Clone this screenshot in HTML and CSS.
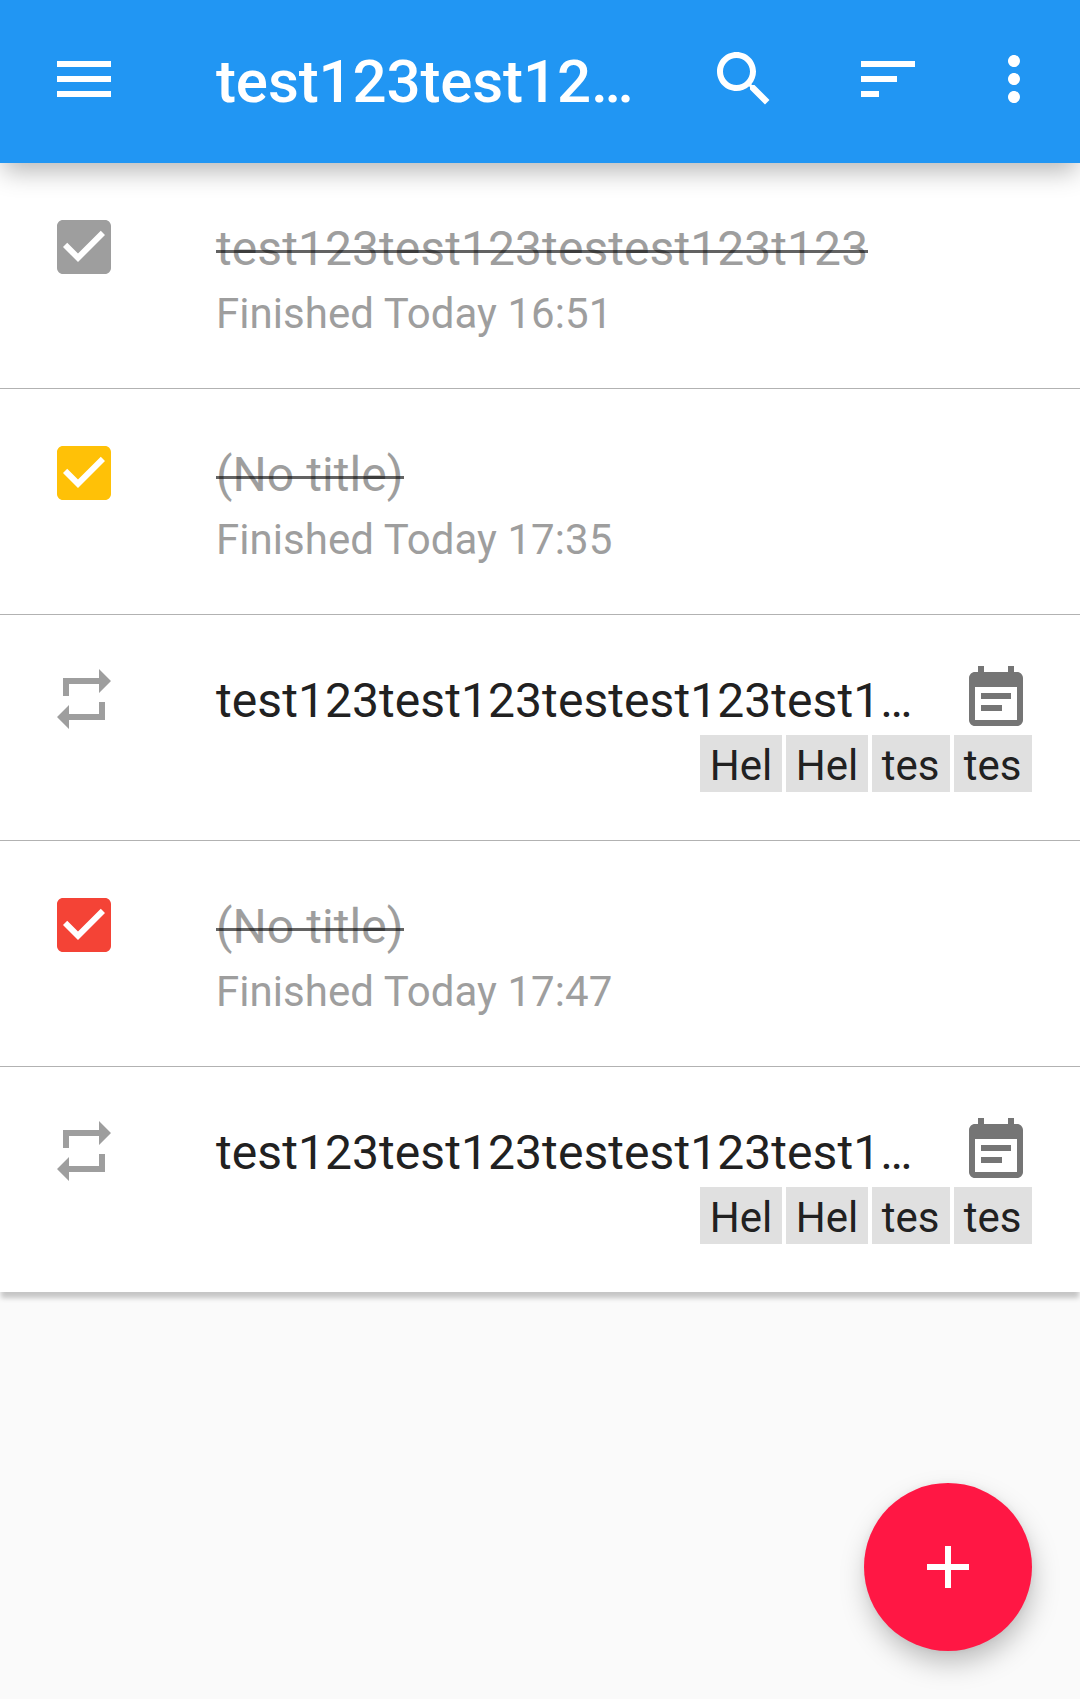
FILE: index.html
```html
<!DOCTYPE html>
<html lang="en">
<head>
<meta charset="utf-8">
<title>Tasks</title>
<link rel="stylesheet" href="styles.css">
</head>
<body>
<svg class="defs" aria-hidden="true">
  <symbol id="check" viewBox="0 0 24 24"><path d="M19 3H5c-1.11 0-2 .9-2 2v14c0 1.1.89 2 2 2h14c1.11 0 2-.9 2-2V5c0-1.1-.89-2-2-2zm-9 14l-5-5 1.41-1.41L10 14.17l7.59-7.59L19 8l-9 9z"/></symbol>
  <symbol id="repeat" viewBox="0 0 24 24"><path d="M7 7h10v3l4-4-4-4v3H5v6h2V7zm10 10H7v-3l-4 4 4 4v-3h12v-6h-2v4z"/></symbol>
  <symbol id="note" viewBox="0 0 24 24"><path d="M17 10H7v2h10v-2zm2-7h-1V1h-2v2H8V1H6v2H5c-1.11 0-1.99.9-1.99 2L3 19c0 1.1.89 2 2 2h14c1.1 0 2-.9 2-2V5c0-1.1-.9-2-2-2zm0 16H5V8h14v11zm-5-5H7v2h7v-2z"/></symbol>
</svg>

<header class="toolbar">
  <svg class="icon" viewBox="0 0 24 24"><path d="M3 18h18v-2H3v2zm0-5h18v-2H3v2zm0-7v2h18V6H3z"/></svg>
  <h1 class="toolbar-title">test123test12…</h1>
  <svg class="icon" viewBox="0 0 24 24"><path d="M15.5 14h-.79l-.28-.27C15.41 12.59 16 11.11 16 9.5 16 5.91 13.09 3 9.5 3S3 5.91 3 9.5 5.91 16 9.5 16c1.61 0 3.09-.59 4.23-1.57l.27.28v.79l5 4.99L20.49 19l-4.99-5zm-6 0C7.01 14 5 11.99 5 9.5S7.01 5 9.5 5 14 7.01 14 9.5 11.99 14 9.5 14z"/></svg>
  <svg class="icon icon-sort" viewBox="0 0 24 24"><path d="M3 18h6v-2H3v2zM3 6v2h18V6H3zm0 7h12v-2H3v2z"/></svg>
  <svg class="icon icon-more" viewBox="0 0 24 24"><path d="M12 8c1.1 0 2-.9 2-2s-.9-2-2-2-2 .9-2 2 .9 2 2 2zm0 2c-1.1 0-2 .9-2 2s.9 2 2 2 2-.9 2-2-.9-2-2-2zm0 6c-1.1 0-2 .9-2 2s.9 2 2 2 2-.9 2-2-.9-2-2-2z"/></svg>
</header>

<main class="list">
  <article class="task">
    <svg class="icon grey"><use href="#check"/></svg>
    <h2 class="title done"><span>test123test123testest123t123</span></h2>
    <p class="subtitle">Finished Today 16:51</p>
  </article>
  <article class="task">
    <svg class="icon amber"><use href="#check"/></svg>
    <h2 class="title done"><span>(No title)</span></h2>
    <p class="subtitle">Finished Today 17:35</p>
  </article>
  <article class="task">
    <svg class="icon grey"><use href="#repeat"/></svg>
    <h2 class="title">test123test123testest123test1…</h2>
    <svg class="icon note"><use href="#note"/></svg>
    <div class="tags"><span>Hel</span><span>Hel</span><span>tes</span><span>tes</span></div>
  </article>
  <article class="task">
    <svg class="icon red"><use href="#check"/></svg>
    <h2 class="title done"><span>(No title)</span></h2>
    <p class="subtitle">Finished Today 17:47</p>
  </article>
  <article class="task">
    <svg class="icon grey"><use href="#repeat"/></svg>
    <h2 class="title">test123test123testest123test1…</h2>
    <svg class="icon note"><use href="#note"/></svg>
    <div class="tags"><span>Hel</span><span>Hel</span><span>tes</span><span>tes</span></div>
  </article>
</main>

<button class="fab" aria-label="Add">
  <svg class="icon" viewBox="0 0 24 24"><path d="M19 13h-6v6h-2v-6H5v-2h6V5h2v6h6v2z"/></svg>
</button>
</body>
</html>
```
FILE: styles.css
```css
* { box-sizing: border-box; }

body {
  margin: 0;
  height: 1699px;
  overflow: hidden;
  background: #fafafa;
  color: #212121;
  font-family: Roboto, sans-serif;
}

h1, h2, p { margin: 0; font-weight: 400; }

.defs { display: none; }

.icon {
  display: block;
  flex: none;
  width: 72px;
  height: 72px;
  fill: currentColor;
}

.toolbar {
  position: relative;
  z-index: 1;
  display: flex;
  align-items: flex-start;
  height: 163px;
  padding: 43px 30px 0 48px;
  background: #2196f3;
  color: #fff;
  box-shadow: 0 11px 24px -3px rgba(0, 0, 0, .29);
}

.toolbar-title {
  flex: 1;
  margin: -43px 0 0 96px;
  font-size: 60px;
  font-weight: 500;
  line-height: 163px;
  letter-spacing: -.12px;
  white-space: nowrap;
}

.icon-sort { margin-left: 72px; }
.icon-more { margin-left: 54px; }

.list {
  background: #fff;
  box-shadow: 0 7px 5px -1px rgba(0, 0, 0, .21);
}

.task {
  display: grid;
  grid-template-columns: 72px minmax(0, 1fr) 72px;
  grid-template-rows: 72px auto;
  align-content: start;
  height: 226px;
  padding: 48px 48px 0;
  border-bottom: 1px solid #b2b2b2;
}

.task:last-child {
  height: 225px;
  border-bottom: 0;
}

.title {
  margin-left: 96px;
  font-size: 48px;
  line-height: 75px;
  letter-spacing: .07px;
  white-space: nowrap;
}

.title.done { color: #9e9e9e; }

.title.done span {
  position: relative;
  display: inline-block;
}

/* Strike line drawn translucent so it darkens where it crosses letters */
.title.done span::after {
  content: "";
  position: absolute;
  left: 0;
  right: 0;
  top: 39px;
  height: 3px;
  background: rgba(0, 0, 0, .61);
}

.subtitle {
  grid-column: 2;
  margin-left: 96px;
  color: #9e9e9e;
  font-size: 42px;
  line-height: 61px;
  letter-spacing: .05px;
  white-space: nowrap;
}

.tags {
  grid-column: 1 / -1;
  display: flex;
  justify-content: flex-end;
  gap: 4px;
}

.tags span {
  min-width: 78px;
  height: 57px;
  padding: 0 9.8px;
  background: #e0e0e0;
  font-size: 42px;
  line-height: 61px;
}

.grey { color: #9e9e9e; }
.amber { color: #ffc107; }
.red { color: #f44336; }
.note { color: #757575; }

.fab {
  position: fixed;
  right: 48px;
  bottom: 48px;
  display: flex;
  align-items: center;
  justify-content: center;
  width: 168px;
  height: 168px;
  padding: 0;
  border: 0;
  border-radius: 50%;
  background: #ff1744;
  color: #fff;
  box-shadow: 2px 13px 28px -2px rgba(0, 0, 0, .26), 0 0 10px rgba(0, 0, 0, .06);
}
```
